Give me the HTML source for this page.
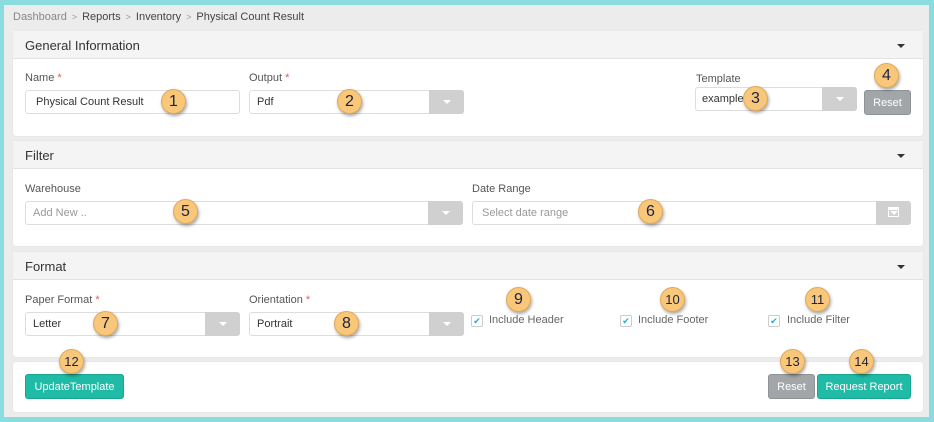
<!DOCTYPE html>
<html><head><meta charset="utf-8"><style>
*{box-sizing:border-box;margin:0;padding:0}
body{width:934px;height:422px;background:#8adcdf;font-family:"Liberation Sans",sans-serif;position:relative;overflow:hidden}
.bg{position:absolute;left:4px;top:5px;width:925px;height:412px;background:#ececec}
.abs{position:absolute}
.crumb{left:13px;top:11px;font-size:11px;color:#444}
.crumb .g{color:#888}.crumb .s{color:#999;font-size:9px;margin:0 5px}
.panel{position:absolute;left:13px;width:910px;background:#fff;border-radius:3px;box-shadow:0 0 1px #ccc}
.ph{height:28px;background:#f4f4f4;border-bottom:1px solid #e2e2e2;font-size:13px;color:#333;padding:7px 12px;position:relative}
.ph:after{content:"";position:absolute;right:18px;top:13px;border:4px solid transparent;border-top:4px solid #333;border-bottom:0}
.lbl{font-size:11px;color:#555}
.lbl i{color:#e55;font-style:normal}
.inp{position:absolute;height:24px;border:1px solid #ddd;border-radius:3px;background:#fff;font-size:11px;color:#333;padding:5px 7px}
.inp.ph2{color:#999}
.dd{position:absolute;right:-1px;top:-1px;width:35px;height:24px;background:#d0d0d0;border-radius:0 3px 3px 0}
.dd:after{content:"";position:absolute;left:14px;top:10px;border:4px solid transparent;border-top:4px solid #fff;border-bottom:0}
.btn{position:absolute;height:25px;border-radius:3px;color:#fff;font-size:11px;text-align:center;line-height:25px}
.gray{background:#a3a6a9;border:1px solid #909396}
.teal{background:#1fbba6;border:1px solid #19a590}
.badge{position:absolute;width:25px;height:25px;border-radius:50%;background:#f9c77a;border:1px solid #e0a95a;box-shadow:1px 2px 3px rgba(0,0,0,.35);color:#1a2340;font-size:16px;text-align:center;line-height:24px}
.badge.sm{font-size:13px}
.cb{position:absolute;width:12px;height:12px;border:1px solid #ccc;border-radius:2px;background:#fff;font-size:9px;color:#22a8dc;line-height:11px;text-align:center}
.cbl{position:absolute;font-size:11px;color:#666}
</style></head><body>
<div class="bg"></div>
<div class="abs crumb"><span class="g">Dashboard</span><span class="s">&gt;</span>Reports<span class="s">&gt;</span>Inventory<span class="s">&gt;</span>Physical Count Result</div>

<div class="panel" style="top:31px;height:105px"><div class="ph">General Information</div></div>
<div class="panel" style="top:141px;height:105px"><div class="ph">Filter</div></div>
<div class="panel" style="top:252px;height:105px"><div class="ph">Format</div></div>
<div class="panel" style="top:362px;height:50px"></div>

<div class="abs lbl" style="left:25px;top:72px">Name <i>*</i></div>
<div class="inp" style="left:25px;top:90px;width:215px;padding-left:10px">Physical Count Result</div>
<div class="abs lbl" style="left:249px;top:72px">Output <i>*</i></div>
<div class="inp" style="left:249px;top:90px;width:215px">Pdf<div class="dd"></div></div>
<div class="abs lbl" style="left:696px;top:73px">Template</div>
<div class="inp" style="left:695px;top:87px;width:162px;padding-left:6px">example<div class="dd"></div></div>
<div class="btn gray" style="left:864px;top:90px;width:47px">Reset</div>

<div class="abs lbl" style="left:25px;top:183px">Warehouse</div>
<div class="inp ph2" style="left:25px;top:201px;width:438px">Add New ..<div class="dd"></div></div>
<div class="abs lbl" style="left:472px;top:183px">Date Range</div>
<div class="inp ph2" style="left:472px;top:201px;width:439px;padding-left:9px">Select date range<div class="dd" style="background:#d0d0d0"></div></div>
<div class="abs" style="left:888px;top:207px;width:11px;height:10px;border:1px solid #fff;border-top-width:3px"></div>

<div class="abs lbl" style="left:25px;top:294px">Paper Format <i>*</i></div>
<div class="inp" style="left:25px;top:312px;width:215px">Letter<div class="dd"></div></div>
<div class="abs lbl" style="left:249px;top:294px">Orientation <i>*</i></div>
<div class="inp" style="left:249px;top:312px;width:215px">Portrait<div class="dd"></div></div>
<div class="cb" style="left:471px;top:315px">✔</div><div class="cbl" style="left:489px;top:314px">Include Header</div>
<div class="cb" style="left:620px;top:315px">✔</div><div class="cbl" style="left:638px;top:314px">Include Footer</div>
<div class="cb" style="left:768px;top:315px">✔</div><div class="cbl" style="left:787px;top:314px">Include Filter</div>

<div class="btn teal" style="left:25px;top:374px;width:99px">UpdateTemplate</div>
<div class="btn gray" style="left:768px;top:374px;width:47px">Reset</div>
<div class="btn teal" style="left:817px;top:374px;width:94px">Request Report</div>

<div class="badge" style="left:161px;top:89px">1</div>
<div class="badge" style="left:337px;top:89px">2</div>
<div class="badge" style="left:743px;top:86px">3</div>
<div class="badge" style="left:874px;top:63px">4</div>
<div class="badge" style="left:173px;top:199px">5</div>
<div class="badge" style="left:638px;top:199px">6</div>
<div class="badge" style="left:93px;top:311px">7</div>
<div class="badge" style="left:334px;top:311px">8</div>
<div class="badge" style="left:506px;top:287px">9</div>
<div class="badge sm" style="left:660px;top:287px">10</div>
<div class="badge sm" style="left:805px;top:287px">11</div>
<div class="badge sm" style="left:59px;top:349px">12</div>
<div class="badge sm" style="left:780px;top:349px">13</div>
<div class="badge sm" style="left:849px;top:349px">14</div>
</body></html>
